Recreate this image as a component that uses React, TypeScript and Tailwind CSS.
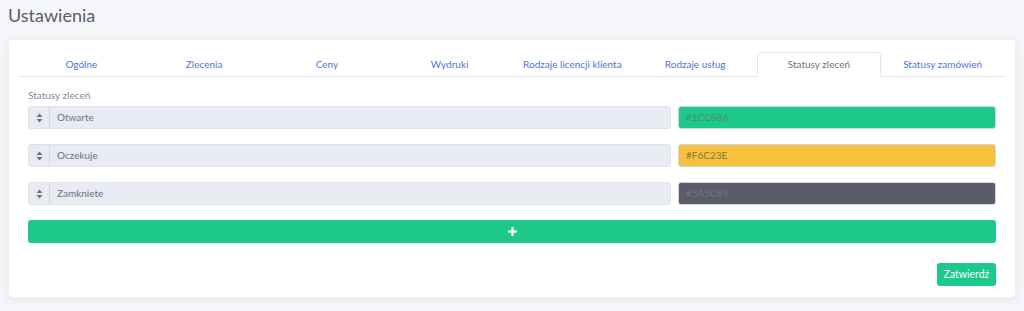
import React from "react";

const tabs = [
  "Ogólne",
  "Zlecenia",
  "Ceny",
  "Wydruki",
  "Rodzaje licencji klienta",
  "Rodzaje usług",
  "Statusy zleceń",
  "Statusy zamówień",
];

const rows = [
  { name: "Otwarte", color: "#1CC88A", bg: "bg-[#1cc88a]", text: "text-[#4f8a72]" },
  { name: "Oczekuje", color: "#F6C23E", bg: "bg-[#f6c23e]", text: "text-[#87733f]" },
  { name: "Zamkniete", color: "#5A5C69", bg: "bg-[#5a5c69]", text: "text-[#727480]" },
];

function SortIcon() {
  return (
    <svg width="7" height="10" viewBox="0 0 7 10" fill="#6e707e">
      <path d="M3.5 0.5 L6.5 4 H0.5 Z" />
      <path d="M3.5 9.5 L6.5 6 H0.5 Z" />
    </svg>
  );
}

export default function App() {
  return (
    <div
      className="w-[1024px] h-[311px] bg-[#f5f6fa] overflow-hidden"
      style={{ fontFamily: 'Lato, sans-serif' }}
    >
      <h1 className="pl-[8px] pt-[1px] h-[39px] text-[18px] leading-[28px] text-[#5a5c69]">
        Ustawienia
      </h1>
      <div className="mx-[8px] bg-white rounded-[4px] shadow-[0_2px_8px_rgba(58,59,69,0.08)] border border-[#eef0f5] px-[11px] pt-[12px] pb-[11px]">
        <div className="flex border-b border-[#e3e6f0] h-[25px]">
          {tabs.map((t) => {
            const active = t === "Statusy zleceń";
            return (
              <div
                key={t}
                className={
                  "flex-1 flex items-center justify-center text-[10px] " +
                  (active
                    ? "border border-[#e3e6f0] border-b-white -mb-px rounded-t-[4px] bg-white text-[#6e707e]"
                    : "text-[#4e73df]")
                }
              >
                {t}
              </div>
            );
          })}
        </div>
        <div className="px-[8px]">
          <div className="pt-[11px] text-[10px] text-[#858796] leading-[14px]">Statusy zleceń</div>
          <div className="mt-[4px] flex flex-col gap-[15px]">
            {rows.map((r) => (
              <div key={r.name} className="flex gap-[7px] h-[23px]">
                <div className="flex-1 flex rounded-[3px] border border-[#dfe2ea] bg-[#e9ebf3]">
                  <div className="w-[21px] flex items-center justify-center border-r border-[#d6d9e3]">
                    <SortIcon />
                  </div>
                  <div className="flex items-center pl-[7px] text-[10px] text-[#6e707e]">{r.name}</div>
                </div>
                <div
                  className={
                    "w-[318px] flex items-center pl-[7px] rounded-[3px] border border-[#d1d3e2] text-[10px] " +
                    r.bg +
                    " " +
                    r.text
                  }
                >
                  {r.color}
                </div>
              </div>
            ))}
          </div>
          <div className="mt-[15px] h-[23px] rounded-[3px] bg-[#1cc88a] flex items-center justify-center text-white">
            <svg width="9" height="9" viewBox="0 0 9 9" fill="white">
              <rect x="3.4" y="0" width="2.2" height="9" />
              <rect x="0" y="3.4" width="9" height="2.2" />
            </svg>
          </div>
          <div className="mt-[20px] flex justify-end">
            <div className="h-[23px] w-[59px] rounded-[3px] bg-[#1cc88a] flex items-center justify-center text-white text-[10.5px]">
              Zatwierdź
            </div>
          </div>
        </div>
      </div>
    </div>
  );
}
